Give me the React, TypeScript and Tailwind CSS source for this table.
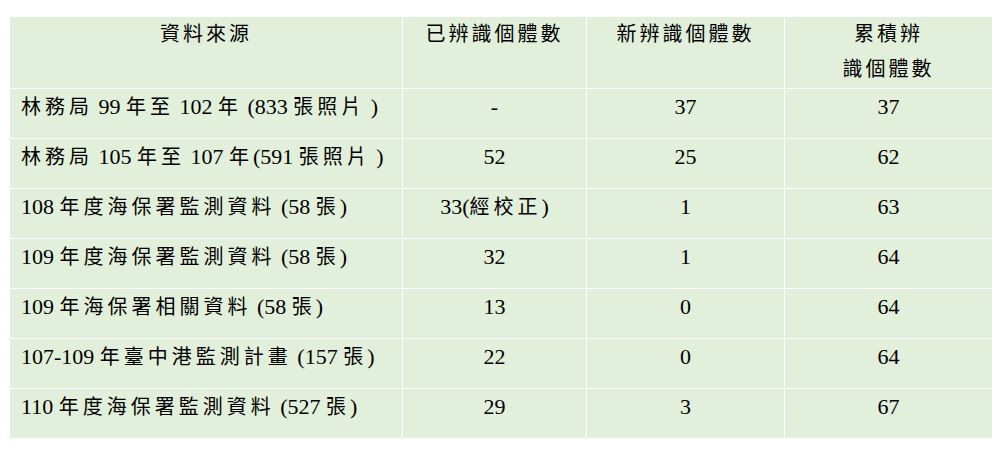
import React from 'react';

const rows: [string, string, string, string][] = [
  ['林務局 99 年至 102 年 (833 張照片 )', '-', '37', '37'],
  ['林務局 105 年至 107 年(591 張照片 )', '52', '25', '62'],
  ['108 年度海保署監測資料 (58 張)', '33(經校正)', '1', '63'],
  ['109 年度海保署監測資料 (58 張)', '32', '1', '64'],
  ['109 年海保署相關資料 (58 張)', '13', '0', '64'],
  ['107-109 年臺中港監測計畫 (157 張)', '22', '0', '64'],
  ['110 年度海保署監測資料 (527 張)', '29', '3', '67'],
];

// CJK runs get a smaller size and wider spacing, like the source document
const Mixed = ({ text }: { text: string }) => (
  <>
    {text.split(/([\u4e00-\u9fff]+)/).map((part, i) =>
      /[\u4e00-\u9fff]/.test(part) ? (
        <span key={i} className="text-[20px] tracking-[4px]">
          {part}
        </span>
      ) : (
        <span key={i}>{part}</span>
      )
    )}
  </>
);

function App() {
  return (
    <div className="w-[1000px] h-[450px] bg-white pt-[16px] pl-[9px] font-['Liberation_Serif','Noto_Sans_CJK_TC',serif] text-[22px] text-black">
      <table className="table-fixed border-collapse w-[983px] bg-[#e2efda]">
        <colgroup>
          <col className="w-[393px]" />
          <col className="w-[184px]" />
          <col className="w-[198px]" />
          <col className="w-[208px]" />
        </colgroup>
        <thead>
          <tr className="h-[72px] text-[20px]">
            <th className="border border-white align-top font-normal leading-[35px] tracking-[3px] text-center">資料來源</th>
            <th className="border border-white align-top font-normal leading-[35px] tracking-[3px] text-center">已辨識個體數</th>
            <th className="border border-white align-top font-normal leading-[35px] tracking-[3px] text-center">新辨識個體數</th>
            <th className="border border-white align-top font-normal leading-[35px] tracking-[3px] text-center">
              累積辨
              <br />
              識個體數
            </th>
          </tr>
        </thead>
        <tbody>
          {rows.map((r, i) => (
            <tr key={i} className="h-[50px]">
              <td className="border border-white align-top leading-[35px] pl-[11px] whitespace-nowrap">
                <Mixed text={r[0]} />
              </td>
              <td className="border border-white align-top leading-[35px] text-center">
                <Mixed text={r[1]} />
              </td>
              <td className="border border-white align-top leading-[35px] text-center">{r[2]}</td>
              <td className="border border-white align-top leading-[35px] text-center">{r[3]}</td>
            </tr>
          ))}
        </tbody>
      </table>
    </div>
  );
}

export default App;
